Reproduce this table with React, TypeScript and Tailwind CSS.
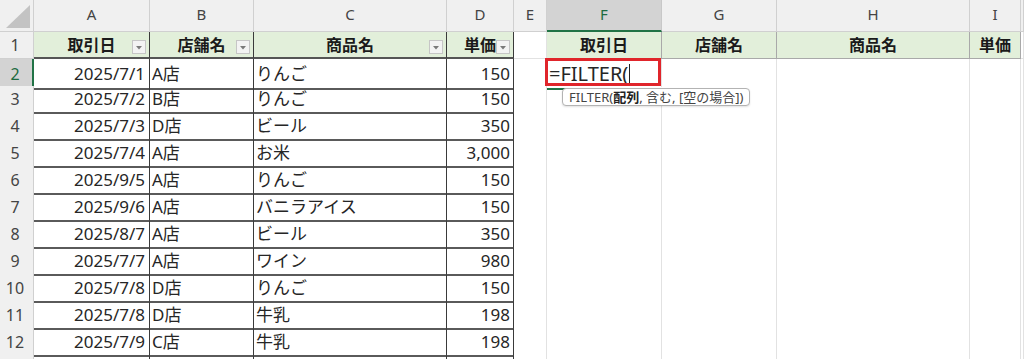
import React from "react";

const GRID =
  "grid grid-cols-[34px_116px_104px_193px_67px_33px_115px_115px_193px_51px_1fr]";

const LETTERS = ["A", "B", "C", "D", "E", "F", "G", "H", "I", ""];

const DATA: [string, string, string, string][] = [
  ["2025/7/1", "A店", "りんご", "150"],
  ["2025/7/2", "B店", "りんご", "150"],
  ["2025/7/3", "D店", "ビール", "350"],
  ["2025/7/4", "A店", "お米", "3,000"],
  ["2025/9/5", "A店", "りんご", "150"],
  ["2025/9/6", "A店", "バニラアイス", "150"],
  ["2025/8/7", "A店", "ビール", "350"],
  ["2025/7/7", "A店", "ワイン", "980"],
  ["2025/7/8", "D店", "りんご", "150"],
  ["2025/7/8", "D店", "牛乳", "198"],
  ["2025/7/9", "C店", "牛乳", "198"],
];

function FilterButton() {
  return (
    <span className="absolute right-[3px] bottom-[3px] flex h-[14px] w-[14px] items-end justify-center border border-[#c6c6c6] bg-[#f3f3f3] pb-[3px]">
      <svg width="6" height="4" viewBox="0 0 6 4">
        <path d="M0 0 L6 0 L3 3.5 Z" fill="#7a7a7a" />
      </svg>
    </span>
  );
}

function RowHeader({ n, active }: { n?: number; active?: boolean }) {
  return active ? (
    <div className="flex items-center justify-center border-r-2 border-b border-r-[#217346] border-b-[#c8c8c8] bg-[#d3d3d3] pr-[2px] text-[16px] font-normal text-[#1d6b40]">
      {n}
    </div>
  ) : (
    <div className="flex items-center justify-center border-r border-b border-[#d0d0d0] bg-[#f0f0f0] pr-[3px] text-[16px] font-normal text-[#444]">
      {n}
    </div>
  );
}

// thin gridline cell outside the table
function Blank() {
  return <div className="border-r border-b border-[#e2e2e2] bg-white" />;
}

export default function App() {
  return (
    <div className="h-[359px] w-[1024px] overflow-hidden bg-white font-['Noto_Sans','Noto_Sans_CJK_JP',sans-serif] text-[#262626]">
      {/* column letters */}
      <div className={`${GRID} h-[32px]`}>
        <div className="flex items-end justify-end border-r border-b border-[#d0d0d0] bg-[#f0f0f0] pr-[3px] pb-[3px]">
          <svg width="24" height="23" viewBox="0 0 24 23">
            <path d="M24 0 L24 23 L0 23 Z" fill="#c3c3c3" />
          </svg>
        </div>
        {LETTERS.map((l, i) =>
          l === "F" ? (
            <div
              key={i}
              className="flex items-start justify-center border-r border-b-2 border-r-[#c8c8c8] border-b-[#217346] bg-[#d3d3d3] pt-[3px] text-[15px] text-[#1d6b40]"
            >
              {l}
            </div>
          ) : (
            <div
              key={i}
              className="flex items-start justify-center border-r border-b border-[#d0d0d0] bg-[#f0f0f0] pt-[3px] text-[15px] text-[#444]"
            >
              {l}
            </div>
          )
        )}
      </div>

      {/* row 1: headings */}
      <div className={`${GRID} h-[27px] text-[16px] text-[#1a1a1a]`}>
        <RowHeader n={1} />
        {["取引日", "店舗名", "商品名", "単価"].map((h) => (
          <div
            key={h}
            className="relative flex items-center justify-center border-r border-b-2 border-r-[#3a3a3a] border-b-[#555] bg-[#e2efda] font-bold"
          >
            {h}
            <FilterButton />
          </div>
        ))}
        <Blank />
        {["取引日", "店舗名", "商品名", "単価"].map((h, i) => (
          <div
            key={h + i}
            className="flex items-center justify-center border-r border-b border-[#a9a9a9] bg-[#e2efda] font-bold"
          >
            {h}
          </div>
        ))}
        <Blank />
      </div>

      {/* data rows */}
      {DATA.map((r, idx) => (
        <div key={idx} className={`${GRID} h-[27px] text-[17px]`}>
          <RowHeader n={idx + 2} active={idx === 0} />
          <div className="flex items-center justify-end border-r border-b-2 border-r-[#3a3a3a] border-b-[#5a5a5a] pr-[4px]">
            {r[0]}
          </div>
          <div className="flex items-center border-r border-b-2 border-r-[#3a3a3a] border-b-[#5a5a5a] pl-[2px]">
            {r[1]}
          </div>
          <div className="flex items-center border-r border-b-2 border-r-[#3a3a3a] border-b-[#5a5a5a] pl-[2px]">
            {r[2]}
          </div>
          <div className="flex items-center justify-end border-r border-b-2 border-r-[#3a3a3a] border-b-[#5a5a5a] pr-[3px]">
            {r[3]}
          </div>
          <Blank />
          {idx === 0 ? (
            <div className="relative flex items-center border-r border-b border-[#e2e2e2] pl-[2px] text-[20px]">
              <span>=FILTER(</span>
              <span className="ml-[1px] h-[20px] w-[1px] bg-[#222]" />
              {/* active cell outline and fill handle */}
              <span className="absolute -bottom-[1px] left-0 right-0 h-[2px] bg-[#217346]" />
              <span className="absolute -right-[3px] -bottom-[3px] h-[5px] w-[5px] border border-white bg-[#217346]" />
              {/* red highlight */}
              <span className="absolute -left-[2px] -top-[1px] h-[28px] w-[116px] border-[3px] border-[#e0252b]" />
              {/* formula tooltip */}
              <span className="absolute left-[15px] top-[29px] z-10 whitespace-nowrap rounded-[4px] border border-[#b3b3b3] bg-white px-[6px] text-[13px] leading-[16px] text-[#444] shadow-[0_1px_2px_rgba(0,0,0,0.12)]">
                FILTER(<b className="font-bold text-[#222]">配列</b>, 含む, [空の場合])
              </span>
            </div>
          ) : (
            <Blank />
          )}
          <Blank />
          <Blank />
          <Blank />
          <Blank />
        </div>
      ))}

      {/* row 13, cut off by the window */}
      <div className={`${GRID} h-[27px]`}>
        <RowHeader />
        <div className="border-r border-[#3a3a3a]" />
        <div className="border-r border-[#3a3a3a]" />
        <div className="border-r border-[#3a3a3a]" />
        <div className="border-r border-[#3a3a3a]" />
        <Blank />
        <Blank />
        <Blank />
        <Blank />
        <Blank />
        <Blank />
      </div>
    </div>
  );
}
